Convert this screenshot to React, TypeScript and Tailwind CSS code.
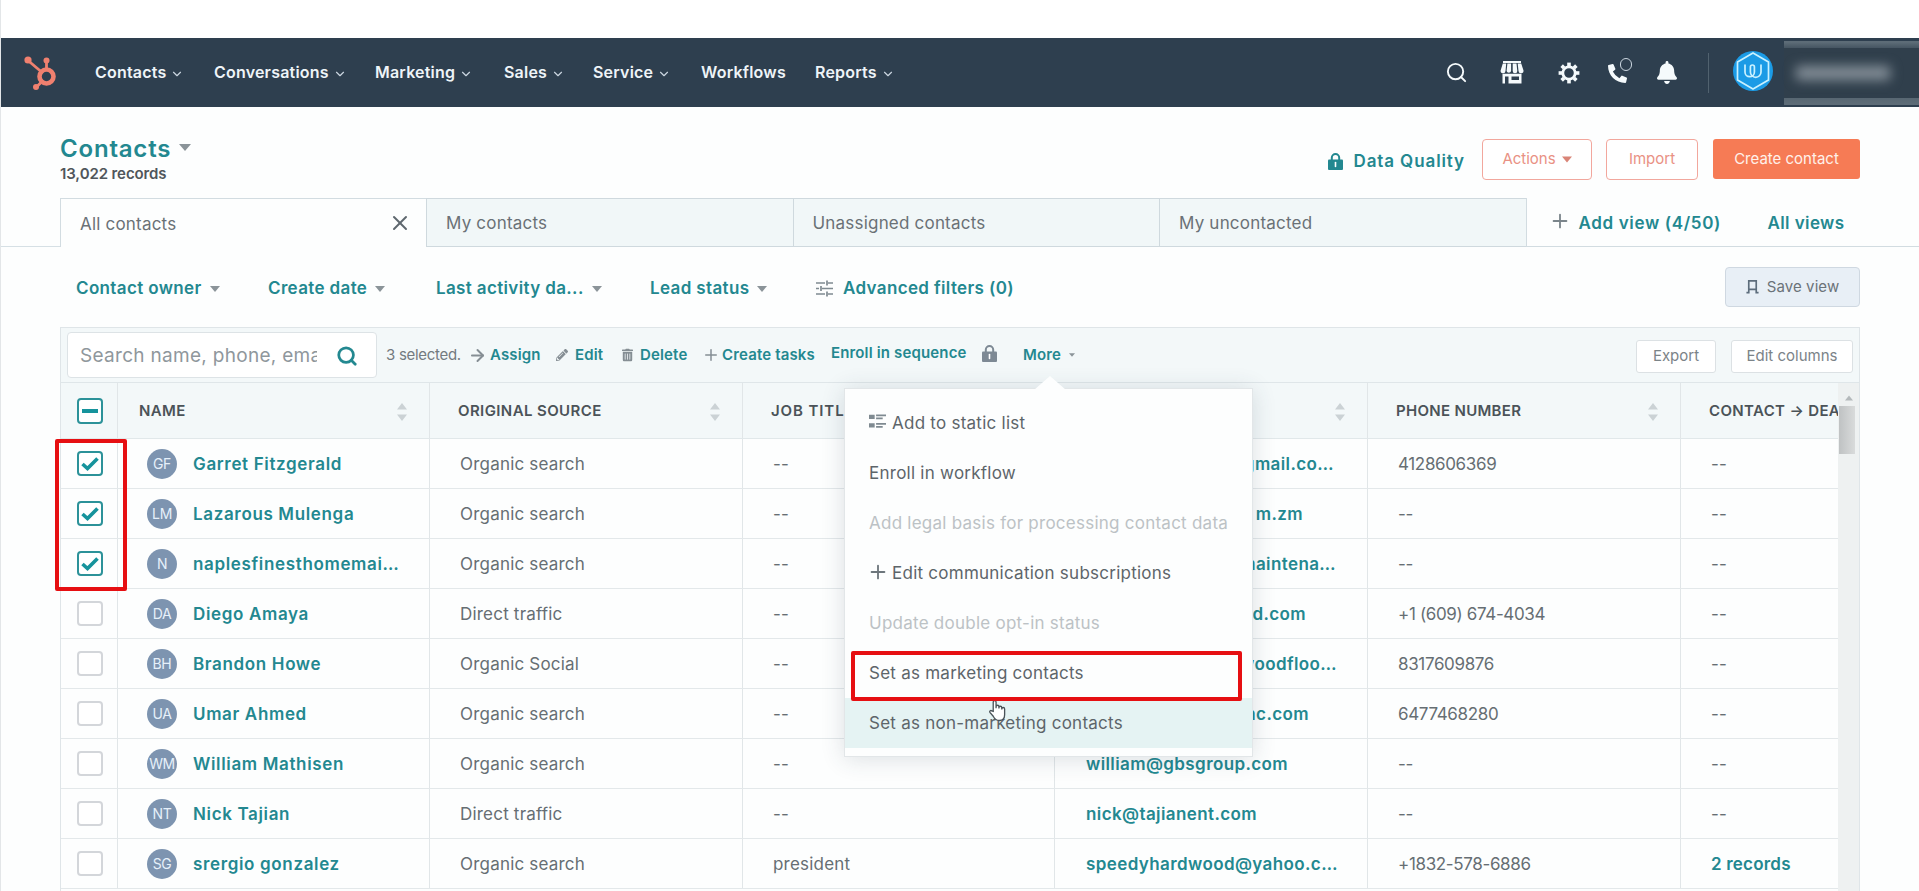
import React from 'react';
import { ArrowRight, ChevronDown, Plus, Search, X } from 'lucide-react';
import { FaBell, FaPencilAlt, FaPhoneAlt, FaTrashAlt } from 'react-icons/fa';

interface Contact {
  initials: string;
  name: string;
  source: string;
  jobTitle: string;
  email: string;
  emailWidth: string;
  phone: string;
  deals: string;
  selected?: boolean;
}

const navItems = [
  { label: 'Contacts', width: 'w-[119px]', menu: true },
  { label: 'Conversations', width: 'w-[161px]', menu: true },
  { label: 'Marketing', width: 'w-[129px]', menu: true },
  { label: 'Sales', width: 'w-[89px]', menu: true },
  { label: 'Service', width: 'w-[108px]', menu: true },
  { label: 'Workflows', width: 'w-[114px]', menu: false },
  { label: 'Reports', width: 'w-[90px]', menu: true },
];

const filters = [
  { label: 'Contact owner', width: 'w-[192px]' },
  { label: 'Create date', width: 'w-[168px]' },
  { label: 'Last activity da...', width: 'w-[214px]' },
  { label: 'Lead status', width: 'w-[166px]' },
];

const columns = [
  { label: 'NAME', width: 'w-[312px]', pad: 'pl-[21px] tracking-[0.4px]' },
  { label: 'ORIGINAL SOURCE', width: 'w-[313px]', pad: 'pl-7 tracking-[0.4px]' },
  { label: 'JOB TITLE', width: 'w-[312px]', pad: 'pl-7 tracking-[0.9px]' },
  { label: 'EMAIL', width: 'w-[313px]', pad: 'pl-7 tracking-[0.4px]' },
  { label: 'PHONE NUMBER', width: 'w-[313px]', pad: 'pl-7 tracking-[0.3px]' },
];

const contacts: Contact[] = [
  { initials: 'GF', name: 'Garret Fitzgerald', source: 'Organic search', jobTitle: '--', email: '@gmail.co…', emailWidth: 'justify-end w-[248px]', phone: '4128606369', deals: '--', selected: true },
  { initials: 'LM', name: 'Lazarous Mulenga', source: 'Organic search', jobTitle: '--', email: 'm.zm', emailWidth: 'justify-end w-[217px]', phone: '--', deals: '--', selected: true },
  { initials: 'N', name: 'naplesfinesthomemai…', source: 'Organic search', jobTitle: '--', email: 'maintena…', emailWidth: 'justify-end w-[250px]', phone: '--', deals: '--', selected: true },
  { initials: 'DA', name: 'Diego Amaya', source: 'Direct traffic', jobTitle: '--', email: 'd.com', emailWidth: 'justify-end w-[220px]', phone: '+1 (609) 674-4034', deals: '--' },
  { initials: 'BH', name: 'Brandon Howe', source: 'Organic Social', jobTitle: '--', email: 'woodfloo…', emailWidth: 'justify-end w-[251px]', phone: '8317609876', deals: '--' },
  { initials: 'UA', name: 'Umar Ahmed', source: 'Organic search', jobTitle: '--', email: 'nc.com', emailWidth: 'justify-end w-[223px]', phone: '6477468280', deals: '--' },
  { initials: 'WM', name: 'William Mathisen', source: 'Organic search', jobTitle: '--', email: 'william@gbsgroup.com', emailWidth: 'w-[250px]', phone: '--', deals: '--' },
  { initials: 'NT', name: 'Nick Tajian', source: 'Direct traffic', jobTitle: '--', email: 'nick@tajianent.com', emailWidth: 'w-[250px]', phone: '--', deals: '--' },
  { initials: 'SG', name: 'srergio gonzalez', source: 'Organic search', jobTitle: 'president', email: 'speedyhardwood@yahoo.c…', emailWidth: 'w-[256px]', phone: '+1832-578-6886', deals: '2 records' },
];

const Caret: React.FC<{ className: string }> = ({ className }) => (
  <svg viewBox="0 0 10 6" className={`shrink-0 ${className}`} fill="currentColor">
    <path d="M0 0h10L5 6z" />
  </svg>
);

const Lock: React.FC<{ className: string }> = ({ className }) => (
  <svg viewBox="0 0 15 17" className={`shrink-0 ${className}`}>
    <path d="M3.8 8V4.8a3.7 3.7 0 0 1 7.4 0V8" fill="none" stroke="currentColor" strokeWidth="2" />
    <rect y="6.5" width="15" height="10.5" rx="1" fill="currentColor" />
    <path d="M7.5 9.5v4" stroke="#fff" strokeWidth="1.6" strokeLinecap="round" />
  </svg>
);

const Sprocket = () => (
  <svg viewBox="0 0 34 34" className="h-[34px] w-[34px]" stroke="#f0806f" fill="none">
    <circle cx="22.5" cy="20.5" r="7" strokeWidth="4.6" />
    <path d="M4 4.5L17 15.5M22.5 5v9M17.5 26L12.5 31" strokeWidth="2.8" />
    <g fill="#f0806f" stroke="none">
      <circle cx="4" cy="4" r="3.6" />
      <circle cx="22.5" cy="4.5" r="3" />
      <circle cx="12" cy="31" r="3" />
    </g>
  </svg>
);

const Storefront = () => (
  <svg viewBox="0 0 24 23" className="h-[23px] w-6" fill="#f5fafc">
    <path d="M3 0h18v2H3zM2.800 2.600h3.400L5.500 10a2.300 2.300 0 0 1-4.900-.5zM7.400 2.600h3.700v7.400a2.300 2.300 0 0 1-4.500 0zM12.700 2.600h3.800l.8 7.400a2.300 2.300 0 0 1-4.600 0zM17.700 2.600h3.500l2.300 6.900a2.300 2.300 0 0 1-5 .5z" />
    <path d="M2.500 12.800h19V22.500h-19zM5 15.500v7h3.500v-7zM11.500 15.500v3.500h7.500v-3.500z" fillRule="evenodd" />
  </svg>
);

const Gear = () => (
  <svg viewBox="0 0 22 22" className="h-[22px] w-[22px]" fill="none" stroke="#f5fafc">
    <circle cx="11" cy="11" r="6.2" strokeWidth="2.8" />
    {[0, 45, 90, 135, 180, 225, 270, 315].map((angle) => (
      <path key={angle} d="M11 .6v3.400" strokeWidth="3.6" transform={`rotate(${angle} 11 11)`} />
    ))}
  </svg>
);

const AccountBadge = () => (
  <svg viewBox="0 0 40 40" className="h-10 w-10">
    <circle cx="20" cy="20" r="20" fill="#1b9be6" />
    <path d="M20 2l15.500 9v18L20 38 4.500 29V11z" fill="none" stroke="#c9f1ff" strokeWidth="1.700" />
    <path
      d="M12 14v7a4.700 4.700 0 0 0 9.400 0v-5a2 2 0 0 0-4 0v5a5.300 5.300 0 0 0 10.600 0v-7"
      fill="none"
      stroke="#c9f1ff"
      strokeWidth="1.700"
      strokeLinecap="round"
    />
  </svg>
);

const Sliders = () => (
  <svg viewBox="0 0 17 17" className="mr-2.5 h-[17px] w-[17px] shrink-0" stroke="#7f8a91" strokeWidth="1.7">
    <path d="M0 3h9M12 3h5M0 8.500h3M6 8.500h11M0 14h9M12 14h5M11 .5v5M5 6v5M11 11.500v5" />
  </svg>
);

const ListIcon = () => (
  <svg viewBox="0 0 18 16" className="mt-[13px] mr-1.5 h-4 w-[17px] shrink-0 self-start" stroke="#7f8a91" fill="none">
    <path d="M0 3.500h6M0 12.500h6" strokeWidth="4.500" />
    <path d="M7.500 2h10.500M7.500 5.200h7M7.500 11h10.500M7.500 14.200h7" strokeWidth="1.900" />
  </svg>
);

const SortArrows = () => (
  <svg viewBox="0 0 10 18" className="mr-[22px] h-[18px] w-2.5 shrink-0" fill="#cbd2d5">
    <path d="M5 0l5 6.500H0zM5 18l5-6.500H0z" />
  </svg>
);

const Checkbox: React.FC<{ checked?: boolean }> = ({ checked }) => (
  <div
    className={`flex h-[25px] w-[26px] items-center justify-center rounded-[4px] border-2 bg-white ${
      checked ? 'border-[#2c9299]' : 'border-[#d3d6da]'
    }`}
  >
    {checked && (
      <svg viewBox="0 0 18 14" className="h-3.5 w-[18px]" fill="none" stroke="#16939c" strokeWidth="3.600">
        <path d="M1.500 7l5 4.500L16.500 1.500" />
      </svg>
    )}
  </div>
);

const link = 'font-semibold text-[#238890]';
const cell = 'flex h-full shrink-0 items-center border-r border-[#e1e6e8]';

const NavBar = () => (
  <nav className="flex h-[69px] items-center bg-[#2e3f4f] pl-6">
    <Sprocket />
    <div className="mb-0.5 ml-[37px] flex grow">
      {navItems.map((item) => (
        <div
          key={item.label}
          className={`flex items-center text-base font-semibold tracking-[0.2px] text-[#eef4f8] ${item.width}`}
        >
          {item.label}
          {item.menu && <ChevronDown className="mt-1 ml-1 h-3.5 w-3.5 text-[#cbd6e0]" strokeWidth={2} />}
        </div>
      ))}
    </div>
    <div className="flex h-full items-center text-[#f5fafc]">
      <Search className="mr-[32px] h-[23px] w-[23px]" strokeWidth={2} />
      <Storefront />
      <div className="ml-[34px]">
        <Gear />
      </div>
      <div className="relative ml-7">
        <FaPhoneAlt className="mt-0.5 h-[19px] w-[19px]" />
        <span className="absolute -top-1 left-3 h-[13px] w-3 rounded-full border-[1.5px] border-[#cbd6e0] bg-[#2e3f4f]" />
      </div>
      <FaBell className="ml-[30px] h-[23px] w-5" />
      <div className="ml-[31px] h-10 w-px bg-[#51626f]" />
      <div className="mr-[11px] mb-1 ml-6">
        <AccountBadge />
      </div>
      <div className="flex h-[64px] w-[135px] items-center bg-gradient-to-b from-[#5d6c77] via-[#2f3f4d] to-[#5d6c77] from-2% via-20% to-98%">
        <div className="flex h-[50px] w-full items-center bg-[#303f4c] pl-3">
          <div className="h-3.5 w-[94px] bg-[#848f98] blur-[6px]" />
        </div>
      </div>
    </div>
  </nav>
);

const PageHeader = () => (
  <header className="flex h-[91px] justify-between pr-[59px] pl-[60px]">
    <div className="pt-6">
      <div className={`flex items-center text-2xl leading-9 tracking-[0.8px] ${link}`}>
        Contacts
        <Caret className="mt-[-4px] ml-2 h-[9px] w-3 text-[#8b9499]" />
      </div>
      <p className="-mt-px text-[15px] leading-4 font-semibold tracking-[-0.1px] text-[#50565b]">13,022 records</p>
    </div>
    <div className="flex items-start pt-8 text-[15px]">
      <div className={`mr-[17px] flex h-[46px] items-center text-[17px] tracking-[0.9px] ${link}`}>
        <Lock className="mr-2.5 mb-0.5 h-[17px] w-[15px]" />
        Data Quality
      </div>
      <button className="mr-3.5 flex h-[41px] w-[110px] items-center justify-center rounded-[4px] border-[1.5px] border-[#f2a79d] bg-white text-[#e99184]">
        Actions
        <Caret className="ml-1.5 h-[7px] w-2.5 text-[#d98477]" />
      </button>
      <button className="mr-[15px] h-[41px] w-[92px] rounded-[4px] border-[1.5px] border-[#f2a79d] bg-white text-[#e99184]">
        Import
      </button>
      <button className="h-10 w-[147px] rounded-[3px] bg-[#f67b55] text-[#fff1ea]">Create contact</button>
    </div>
  </header>
);

const Tabs = () => (
  <div className="flex h-[49px] text-[17px] tracking-[0.2px] text-[#6a7176]">
    <div className="w-[60px] border-b border-[#d6e0e5]" />
    <div className="flex w-[366px] items-center justify-between border-t border-l border-[#d2dce1] pt-[3px] pr-3.5 pl-[19px]">
      All contacts
      <X className="mb-1 h-6 w-6 text-[#5e676e]" strokeWidth={2} />
    </div>
    {['My contacts', 'Unassigned contacts', 'My uncontacted'].map((tab) => (
      <div key={tab} className="flex w-[366.5px] items-center border-y border-l border-[#cfd9de] bg-[#f1f7f8] pt-[3px] pl-[19px]">
        {tab}
      </div>
    ))}
    <div className={`flex grow items-center border-b border-l border-[#d2dce1] pt-1 pl-[22px] tracking-[0.65px] ${link}`}>
      <Plus className="mb-1.5 h-[22px] w-[22px] text-[#7b858b]" strokeWidth={2} />
      <span className="ml-2 w-[189px]">Add view (4/50)</span>
      <span className="tracking-[0.4px]">All views</span>
    </div>
  </div>
);

const FilterBar = () => (
  <div className={`flex h-20 items-center pr-[59px] pl-[76px] text-[17px] tracking-[0.36px] ${link}`}>
    {filters.map((filter) => (
      <div key={filter.label} className={`flex items-center pt-[3px] ${filter.width}`}>
        {filter.label}
        <Caret className="ml-2 h-1.5 w-2.5 text-[#8b9499]" />
      </div>
    ))}
    <div className="flex items-center pt-[3px]">
      <Sliders />
      Advanced filters (0)
    </div>
    <button className="ml-auto flex h-10 w-[135px] items-center justify-center rounded-[4px] border border-[#cfd8e1] bg-[#e8eff6] text-[15px] font-normal tracking-[0.1px] text-[#6b7379]">
      <svg viewBox="0 0 13 15" className="mr-2 h-[14px] w-[13px]" fill="none" stroke="#5d6d7c" strokeWidth="1.800">
        <path d="M2.500 14V1h8v13M0 13.500h2.500V10h8v3.500H13" />
      </svg>
      Save view
    </button>
  </div>
);

const Toolbar = () => (
  <div className={`flex h-[55px] items-center border-b border-[#dfe6e9] bg-[#f3f8f9] pr-1.5 pl-1.5 text-[15px] tracking-[0.15px] ${link}`}>
    <div className="flex h-[46px] w-[310px] items-center rounded-[4px] border border-[#dde3e6] bg-white pt-0.5 pr-[18px] pl-3">
      <span className="w-[237px] overflow-hidden text-[19px] font-normal tracking-[0.3px] whitespace-nowrap text-[#8f979c]">
        Search name, phone, ema
      </span>
      <Search className="ml-auto h-[22px] w-[22px] text-[#238890]" strokeWidth={3} />
    </div>
    <span className="ml-[9px] w-[82px] font-normal tracking-[-0.3px] text-[#737b80]">3 selected.</span>
    <div className="flex w-[88px] items-center">
      <ArrowRight className="mr-[3px] h-[19px] w-[19px] text-[#858e94]" strokeWidth={2.5} />
      Assign
    </div>
    <div className="flex w-[66px] items-center">
      <FaPencilAlt className="mr-[7px] h-3 w-3 text-[#858e94]" />
      Edit
    </div>
    <div className="flex w-[80px] items-center">
      <FaTrashAlt className="mr-[7px] h-3.5 w-[11px] text-[#858e94]" />
      Delete
    </div>
    <div className="flex w-[129px] items-center">
      <Plus className="mr-0.5 h-[18px] w-[18px] text-[#858e94]" strokeWidth={2} />
      Create tasks
    </div>
    <div className="mb-1 flex w-[192px] items-center">
      Enroll in sequence
      <Lock className="ml-[15px] h-[17px] w-[15px] text-[#7d8994]" />
    </div>
    <div className="flex items-center">
      More
      <Caret className="ml-2 h-1 w-1.5 text-[#8b9499]" />
    </div>
    <div className="ml-auto flex gap-[15px] pt-0.5 font-normal tracking-normal text-[#7b8388]">
      <button className="h-[33px] w-20 rounded-[3px] border border-[#dce1e4] bg-white">Export</button>
      <button className="h-[33px] w-[122px] rounded-[3px] border border-[#dce1e4] bg-white">Edit columns</button>
    </div>
  </div>
);

const TableHead = () => (
  <div className="flex h-14 border-b border-[#e1e8ea] bg-[#f3f8f9] text-[15px] font-semibold text-[#4b5358]">
    <div className={`w-[57px] pl-4 ${cell}`}>
      <div className="flex h-[26px] w-[26px] items-center justify-center rounded-[4px] border-2 border-[#2c9299] bg-white">
        <div className="h-1 w-4 bg-[#16939c]" />
      </div>
    </div>
    {columns.map((column) => (
      <div key={column.label} className={`justify-between pt-0.5 ${cell} ${column.width} ${column.pad}`}>
        {column.label}
        <SortArrows />
      </div>
    ))}
    <div className="flex items-center overflow-hidden pt-0.5 pl-7 tracking-[0.35px] whitespace-nowrap">CONTACT → DEALS</div>
  </div>
);

const ContactRow: React.FC<{ contact: Contact }> = ({ contact }) => (
  <div className="flex h-[50px] shrink-0 border-b border-[#e3e8ea] text-[17px] tracking-[0.2px] text-[#666e73]">
    <div className={`w-[57px] pl-4 ${cell}`}>
      <Checkbox checked={contact.selected} />
    </div>
    <div className={`w-[312px] pl-[29px] ${cell}`}>
      <div className="mr-4 flex h-[30px] w-[30px] shrink-0 items-center justify-center rounded-full bg-[#7d94b0] text-sm tracking-tight text-[#e6f0fa]">
        {contact.initials}
      </div>
      <span className={`pt-0.5 tracking-[0.65px] whitespace-nowrap ${link}`}>{contact.name}</span>
    </div>
    <div className={`w-[313px] pt-0.5 pl-[30px] ${cell}`}>{contact.source}</div>
    <div className={`w-[312px] pt-0.5 pl-[30px] ${cell}`}>{contact.jobTitle}</div>
    <div className={`w-[313px] pt-0.5 pl-[31px] ${cell}`}>
      <span className={`flex tracking-[0.4px] whitespace-nowrap ${contact.emailWidth} ${link}`}>{contact.email}</span>
    </div>
    <div className={`w-[313px] pt-0.5 pl-[30px] tracking-[-0.35px] ${cell}`}>{contact.phone}</div>
    <div className="flex items-center pt-0.5 pl-[30px]">
      <span className={contact.deals === '--' ? '' : link}>{contact.deals}</span>
    </div>
  </div>
);

const menuItem = 'flex h-[50px] items-center pl-6 pt-0.5';

const MoreMenu = () => (
  <div className="absolute top-[388px] left-[843px] h-[369px] w-[409px] border border-[#e2e6e8] bg-[#fdfefe] pt-[9px] text-[17px] tracking-[0.25px] text-[#5d656a] shadow-[0_2px_22px_rgba(45,62,80,0.16)]">
    <svg viewBox="0 0 32 14" className="absolute -top-[13px] left-[189px] h-3.5 w-8" fill="#fdfefe">
      <path d="M16 0l16 14H0z" />
    </svg>
    <div className={menuItem}>
      <ListIcon />
      Add to static list
    </div>
    <div className={menuItem}>Enroll in workflow</div>
    <div className={`text-[#bcc2c5] ${menuItem}`}>Add legal basis for processing contact data</div>
    <div className={menuItem}>
      <Plus className="mr-[3px] mb-1 -ml-0.5 h-[22px] w-[22px] text-[#6d767c]" strokeWidth={2} />
      Edit communication subscriptions
    </div>
    <div className={`text-[#bcc2c5] ${menuItem}`}>Update double opt-in status</div>
    <div className={menuItem}>Set as marketing contacts</div>
    <div className={`bg-[#e5f3f3] ${menuItem}`}>Set as non-marketing contacts</div>
  </div>
);

const HandCursor = () => (
  <svg viewBox="0 0 20 23" className="absolute top-[699px] left-[987px] h-[23px] w-[19px]" fill="#fff" stroke="#4a5358" strokeWidth="1.400">
    <path d="M5.500 12.500V2.500a1.500 1.500 0 0 1 3 0V9V7.500a1.500 1.500 0 0 1 3 0V9.500V8.500a1.500 1.500 0 0 1 3 0V10.500V9.800a1.500 1.500 0 0 1 3 0V16c0 3.500-1.500 6-5.500 6-3.500 0-5-1.500-6.500-4.500L2 13.500c-.8-1.500 1-2.500 2-1.500z" />
  </svg>
);

const App: React.FC = () => {
  return (
    <div className="relative h-[891px] w-[1919px] overflow-hidden border-l border-[#e3e6e8] bg-[#fdfefe] font-['Inter',sans-serif]">
      <div className="-ml-px">
        <div className="h-[38px] border-l border-[#d5d8da] bg-white" />
        <NavBar />
        <PageHeader />
        <Tabs />
        <FilterBar />
        <div className="ml-[60px] h-[570px] w-[1800px] border border-[#dfe5e8]">
          <Toolbar />
          <div className="flex">
            <div className="flex w-[1777px] flex-col overflow-hidden">
              <TableHead />
              {contacts.map((contact) => (
                <ContactRow key={contact.name} contact={contact} />
              ))}
            </div>
            {/* Scrollbar */}
            <div className="flex h-[514px] grow flex-col items-center bg-[#eef1f1]">
              <Caret className="mt-3 h-1.5 w-2 rotate-180 text-[#b4b9bb]" />
              <div className="mt-[5px] mr-1 h-[48px] w-4 bg-gradient-to-r from-[#bfc2c3] to-[#d9dbdb]" />
            </div>
          </div>
        </div>
      </div>

      <MoreMenu />
      <HandCursor />

      {/* Highlights around the selected rows and the menu action */}
      <div className="absolute top-[439px] left-[54px] h-[152px] w-[72px] rounded-[2px] border-4 border-[#e60f12]" />
      <div className="absolute top-[651px] left-[850px] h-[50px] w-[391px] rounded-[2px] border-4 border-[#e60f12]" />
    </div>
  );
};

export default App;
